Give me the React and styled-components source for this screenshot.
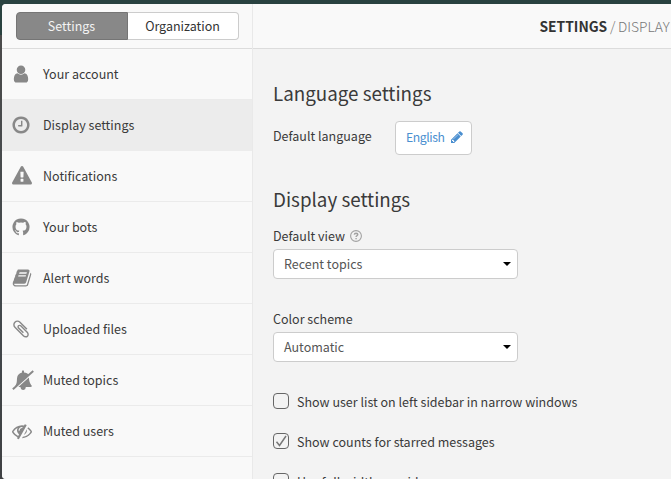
import React from 'react';
import styled, { createGlobalStyle } from 'styled-components';

const GlobalStyle = createGlobalStyle`
  * { box-sizing: border-box; }
  body {
    margin: 0;
    overflow: hidden;
    font-family: "Noto Sans CJK JP", "Noto Sans", sans-serif;
    font-size: 12.5px;
    color: #3a3a3a;
  }
`;

const Backdrop = styled.div`
  height: 479px;
  padding: 4px 0 0 2px;
  overflow: hidden;
  background: linear-gradient(#294240 35px, #4b4b4b 35px, #444a4e 280px, #3f4143);
`;

const Modal = styled.div`
  display: flex;
  height: 475px;
  background: #f3f3f3;
  border-radius: 4px 0 0 4px;
  overflow: hidden;
`;

const Sidebar = styled.aside`
  flex: 0 0 251px;
  background: #f9f9f9;
  border-right: 1px solid #e9e9e9;
`;

const TabBar = styled.div`
  display: flex;
  height: 45px;
  padding: 8px 13px 8px 14px;
  border-bottom: 1px solid #dcdcdc;
`;

const Tab = styled.button`
  flex: 0 0 ${(p) => (p.$active ? 112 : 111)}px;
  height: 28px;
  padding: 0;
  font: inherit;
  line-height: 26px;
  color: ${(p) => (p.$active ? '#f3f3f3' : '#333')};
  background: ${(p) => (p.$active ? '#888' : '#fff')};
  border: 1px solid ${(p) => (p.$active ? '#757575' : '#ccc')};
  border-left-width: ${(p) => (p.$active ? '1px' : '0')};
  border-radius: ${(p) => (p.$active ? '4px 0 0 4px' : '0 4px 4px 0')};
  text-indent: -1px;
`;

const NavList = styled.ul`
  margin: 0;
  padding: 0;
  list-style: none;
`;

const NavItem = styled.li`
  display: flex;
  align-items: center;
  height: 51px;
  padding-left: ${(p) => (p.$wide ? 10 : 9)}px;
  border-bottom: 1px solid ${(p) => (p.$active ? '#ececec' : '#ebebeb')};
  background: ${(p) => (p.$active ? '#ececec' : 'transparent')};
`;

const IconSlot = styled.span`
  display: flex;
  flex: 0 0 ${(p) => (p.$wide ? 31 : 32)}px;
  color: #888;
`;

const Glyph = styled.svg`
  display: block;
  flex: none;
  fill: currentColor;
`;

const Label = styled.span`
  line-height: 20px;
  white-space: nowrap;
`;

const Main = styled.main`
  flex: 1;
  min-width: 0;
`;

const Header = styled.header`
  height: 45px;
  padding-left: 286.5px;
  border-bottom: 1px solid #dcdcdc;
  background: #f9f9f9;
  font-size: 13.8px;
  font-weight: 300;
  line-height: 45px;
  color: #777;
  white-space: nowrap;
  word-spacing: -0.4px;
  text-transform: uppercase;
`;

const Strong = styled.strong`
  font-weight: 700;
  color: #333;
`;

const Content = styled.div`
  padding: 29px 0 0 20px;
`;

const Heading = styled.h3`
  margin: 0;
  font-size: 18.8px;
  font-weight: 400;
  line-height: 30px;
`;

const LanguageRow = styled.div`
  display: flex;
  align-items: flex-start;
  margin: 13px 0 29px;
  height: 34px;
  gap: 23px;
`;

const LanguageLabel = styled(Label)`
  flex: 0 0 99px;
  margin-top: 5px;
`;

const LanguageButton = styled.button`
  display: flex;
  align-items: center;
  gap: 5px;
  width: 77px;
  height: 34px;
  padding: 0 0 2px 10px;
  font: inherit;
  font-size: 12.2px;
  letter-spacing: -0.4px;
  color: #4a8fd0;
  background: #fff;
  border: 1px solid #ccc;
  border-radius: 4px;
`;

const FieldLabel = styled.div`
  display: flex;
  align-items: center;
  gap: 5px;
  height: 20px;
  margin-top: ${(p) => p.$space}px;
  line-height: 20px;
`;

const Select = styled.div`
  display: flex;
  align-items: flex-start;
  justify-content: space-between;
  width: 245px;
  height: 30px;
  margin-top: 3px;
  padding: 0 6px 0 10px;
  line-height: 28px;
  color: #555;
  background: #fff;
  border: 1px solid #ccc;
  border-radius: 4px;
`;

const Caret = styled.i`
  margin-top: 12px;
  border: 4.5px solid transparent;
  border-top-color: #000;
  border-bottom: 0;
`;

const Options = styled.div`
  display: flex;
  flex-direction: column;
  gap: 20px;
  margin-top: 30px;
`;

const Option = styled.label`
  display: flex;
  align-items: center;
  gap: 8px;
  height: 20px;
`;

const Box = styled.span`
  display: flex;
  width: 16px;
  height: 16px;
  margin-top: -2px;
  border: 1px solid #666;
  border-radius: 4px;
  color: #777;
`;

const PATHS = {
  user: 'M1536 1399q0 109-62.5 187t-150.5 78h-854q-88 0-150.5-78t-62.5-187q0-85 8.5-160.5t31.5-152 58.5-131 94-89 134.5-34.5q131 128 313 128t313-128q76 0 134.5 34.5t94 89 58.5 131 31.5 152 8.5 160.5zm-256-887q0 159-112.5 271.5t-271.5 112.5-271.5-112.5-112.5-271.5 112.5-271.5 271.5-112.5 271.5 112.5 112.5 271.5z',
  clock: 'M1024 544v448q0 14-9 23t-23 9h-320q-14 0-23-9t-9-23v-64q0-14 9-23t23-9h224v-352q0-14 9-23t23-9h64q14 0 23 9t9 23zm416 352q0-148-73-273t-198-198-273-73-273 73-198 198-73 273 73 273 198 198 273 73 273-73 198-198 73-273zm224 0q0 209-103 385.5t-279.5 279.5-385.5 103-385.5-103-279.5-279.5-103-385.5 103-385.5 279.5-279.5 385.5-103 385.5 103 279.5 279.5 103 385.5z',
  warning: 'M1024 1375v-190q0-14-9.5-23.5t-22.5-9.5h-192q-13 0-22.5 9.5t-9.5 23.5v190q0 14 9.5 23.5t22.5 9.5h192q13 0 22.5-9.5t9.5-23.5zm-2-374l18-459q0-12-10-19-13-11-24-11h-220q-11 0-24 11-10 7-10 21l17 457q0 10 10 16.5t24 6.5h185q14 0 23.5-6.5t10.5-16.5zm-14-934l768 1408q35 63-2 126-17 29-46.5 46t-63.5 17h-1536q-34 0-63.5-17t-46.5-46q-37-63-2-126l768-1408q17-31 47-49t65-18 65 18 47 49z',
  github: 'M896 128q209 0 385.5 103t279.5 279.5 103 385.5q0 251-146.5 451.5t-378.5 277.5q-27 5-40-7t-13-30q0-3 .5-76.5t.5-134.5q0-97-52-142 57-6 102.5-18t94-39 81-66.5 53-105 20.5-150.5q0-119-79-206 37-91-8-204-28-9-81 11t-92 44l-38 24q-93-26-192-26t-192 26q-16-11-42.5-27t-83.5-38.5-85-13.5q-45 113-8 204-79 87-79 206 0 85 20.5 150t52.5 105 80.5 67 94 39 102.5 18q-39 36-49 103-21 10-45 15t-57 5-65.5-21.5-55.5-62.5q-19-32-48.5-52t-49.5-24l-20-3q-21 0-29 4.5t-5 11.5 9 14 13 12l7 5q22 10 43.5 38t31.5 51l10 23q13 38 44 61.5t67 30 69.5 7 55.5-3.5l23-4q0 38 .5 88.5t.5 54.5q0 18-13 30t-40 7q-232-77-378.5-277.5t-146.5-451.5q0-209 103-385.5t279.5-279.5 385.5-103z',
  book: 'M1703 478q40 57 18 129l-275 906q-19 64-76.5 107.5t-122.5 43.5h-923q-77 0-148.5-53.5t-99.5-131.5q-24-67-2-127 0-4 3-27t4-37q1-8-3-21.5t-3-19.5q2-11 8-21t16.5-23.5 16.5-23.5q23-38 45-91.5t30-91.5q3-10 .5-30t-.5-28q3-11 17-28t17-23q21-36 42-92t25-90q1-9-2.5-32t.5-28q4-13 22-30.5t22-22.5q19-26 42.5-84.5t27.5-96.5q1-8-3-25.5t-2-26.5q2-8 9-18t18-23 17-21q8-12 16.5-30.5t15-35 16-36 19.5-32 26.5-23.5 36-11.5 47.5 5.5l-1 3q38-9 51-9h761q74 0 114 56t18 130l-274 906q-36 119-71.5 153.5t-128.5 34.5h-869q-27 0-38 15-11 16-1 43 24 70 144 70h923q29 0 56-15.5t35-41.5l300-987q7-22 5-57 38 15 59 43zm-1064 2q-4 13 2 22.5t20 9.5h608q13 0 25.5-9.5t16.5-22.5l21-64q4-13-2-22.5t-20-9.5h-608q-13 0-25.5 9.5t-16.5 22.5zm-83 256q-4 13 2 22.5t20 9.5h608q13 0 25.5-9.5t16.5-22.5l21-64q4-13-2-22.5t-20-9.5h-608q-13 0-25.5 9.5t-16.5 22.5z',
  clip: 'M1596 1385q0 117-79 196t-196 79q-135 0-235-100l-777-776q-113-115-113-271 0-159 110-270t269-111q158 0 273 113l605 606q10 10 10 22 0 16-30.5 46.5t-46.5 30.5q-13 0-23-10l-606-607q-79-77-181-77-106 0-179 75t-73 181q0 105 76 181l776 777q63 63 145 63 64 0 106-42t42-106q0-82-63-145l-581-581q-26-24-60-24-29 0-48 19t-19 48q0 32 25 59l410 410q10 10 10 22 0 16-31 47t-47 31q-12 0-22-10l-410-410q-63-61-63-149 0-82 57-139t139-57q88 0 149 63l581 581q100 98 100 235z',
  eyeSlash: 'M555 1335l78-141q-87-63-136-159t-49-203q0-121 61-225-229 117-381 353 167 258 427 375zm389-759q0-20-14-34t-34-14q-125 0-214.5 89.5t-89.5 214.5q0 20 14 34t34 14 34-14 14-34q0-86 61-147t147-61q20 0 34-14t14-34zm363-191q0 7-1 9-106 189-316 567t-315 566l-49 89q-10 16-28 16-12 0-134-70-16-10-16-28 0-12 44-87-143-65-263.5-173t-208.5-245q-20-31-20-69t20-69q153-235 380-371t496-136q89 0 180 17l54-97q10-16 28-16 5 0 18 6t31 15.5 33 18.5 31.5 18.5 19.5 11.5q16 10 16 27zm37 447q0 139-79 253.5t-209 164.5l280-502q8 45 8 84zm448 128q0 35-20 69-39 64-109 145-150 172-347.5 267t-419.5 95l74-132q212-18 392.5-137t301.5-307q-115-179-282-294l63-112q95 64 182.5 153t144.5 184q20 34 20 69z',
  pencil: 'M491 1536l91-91-235-235-91 91v107h128v128h107zm523-928q0-22-22-22-10 0-17 7l-542 542q-7 7-7 17 0 22 22 22 10 0 17-7l542-542q7-7 7-17zm-54-192l416 416-832 832h-416v-416zm683 96q0 53-37 90l-166 166-416-416 166-165q36-38 90-38 53 0 91 38l235 234q37 39 37 91z',
};

function Icon({ name, size = 20 }) {
  return (
    <Glyph width={size} height={size} viewBox="0 0 1792 1792">
      <path d={PATHS[name]} />
    </Glyph>
  );
}

function BellSlash() {
  return (
    <Glyph width="22" height="20" viewBox="0 0 22 20">
      <path d="M2.800 16.600C5.200 13.200 4.800 11 5 8.200C5.300 5.200 7.200 3.200 10 2.600C9.700 1.200 10.200 .3 11 .3S12.300 1.200 12 2.600C14.300 2.900 16 3.800 16.800 4.700L3.600 16.600Z" />
      <path d="M16.900 7.500C17.100 11 17.700 13.400 19.900 15.900Q19.800 17 18.400 17H13.700A2.600 2.600 0 0 1 8.500 17.600V17H6.300Z" />
      <path d="M20.600 .3L21.900 1.700L1.500 20L.2 18.600Z" />
    </Glyph>
  );
}

function HelpIcon() {
  return (
    <Glyph width="12" height="12" viewBox="0 0 12 12" color="#a2a2a2">
      <circle cx="6" cy="6" r="5.400" fill="none" stroke="currentColor" strokeWidth="1.100" />
      <path d="M4.200 4.700Q4.500 3.200 6.100 3.200Q7.800 3.300 7.800 4.600Q7.800 5.400 6.800 5.900Q6.100 6.300 6.100 7" fill="none" stroke="currentColor" strokeWidth="1.400" />
      <path d="M5.400 8h1.400v1.300H5.400z" />
    </Glyph>
  );
}

const NAV = [
  { label: 'Your account', icon: 'user' },
  { label: 'Display settings', icon: 'clock', active: true },
  { label: 'Notifications', icon: 'warning', wide: true },
  { label: 'Your bots', icon: 'github' },
  { label: 'Alert words', icon: 'book', wide: true },
  { label: 'Uploaded files', icon: 'clip' },
  { label: 'Muted topics', icon: 'bell', wide: true },
  { label: 'Muted users', icon: 'eyeSlash', wide: true },
];

const OPTIONS = [
  { label: 'Show user list on left sidebar in narrow windows' },
  { label: 'Show counts for starred messages', checked: true },
  { label: 'Use full width on wide screens' },
];

export default function App() {
  return (
    <Backdrop>
      <GlobalStyle />
      <Modal>
        <Sidebar>
          <TabBar>
            <Tab $active>Settings</Tab>
            <Tab>Organization</Tab>
          </TabBar>
          <NavList>
            {NAV.map(({ label, icon, active, wide }) => (
              <NavItem key={label} $active={active} $wide={wide}>
                <IconSlot $wide={wide}>
                  {icon === 'bell' ? <BellSlash /> : <Icon name={icon} />}
                </IconSlot>
                <Label>{label}</Label>
              </NavItem>
            ))}
          </NavList>
        </Sidebar>
        <Main>
          <Header>
            <Strong>Settings</Strong> / Display settings
          </Header>
          <Content>
            <Heading>Language settings</Heading>
            <LanguageRow>
              <LanguageLabel>Default language</LanguageLabel>
              <LanguageButton>
                English <Icon name="pencil" size={14} />
              </LanguageButton>
            </LanguageRow>
            <Heading>Display settings</Heading>
            <FieldLabel $space={12}>
              Default view <HelpIcon />
            </FieldLabel>
            <Select>
              Recent topics <Caret />
            </Select>
            <FieldLabel $space={30}>Color scheme</FieldLabel>
            <Select>
              Automatic <Caret />
            </Select>
            <Options>
              {OPTIONS.map(({ label, checked }) => (
                <Option key={label}>
                  <Box>
                    {checked && (
                      <Glyph width="14" height="14" viewBox="0 0 14 14">
                        <path d="M2.500 7.800L5.500 11.500L12 2" fill="none" stroke="currentColor" strokeWidth="1.500" />
                      </Glyph>
                    )}
                  </Box>
                  <Label>{label}</Label>
                </Option>
              ))}
            </Options>
          </Content>
        </Main>
      </Modal>
    </Backdrop>
  );
}
